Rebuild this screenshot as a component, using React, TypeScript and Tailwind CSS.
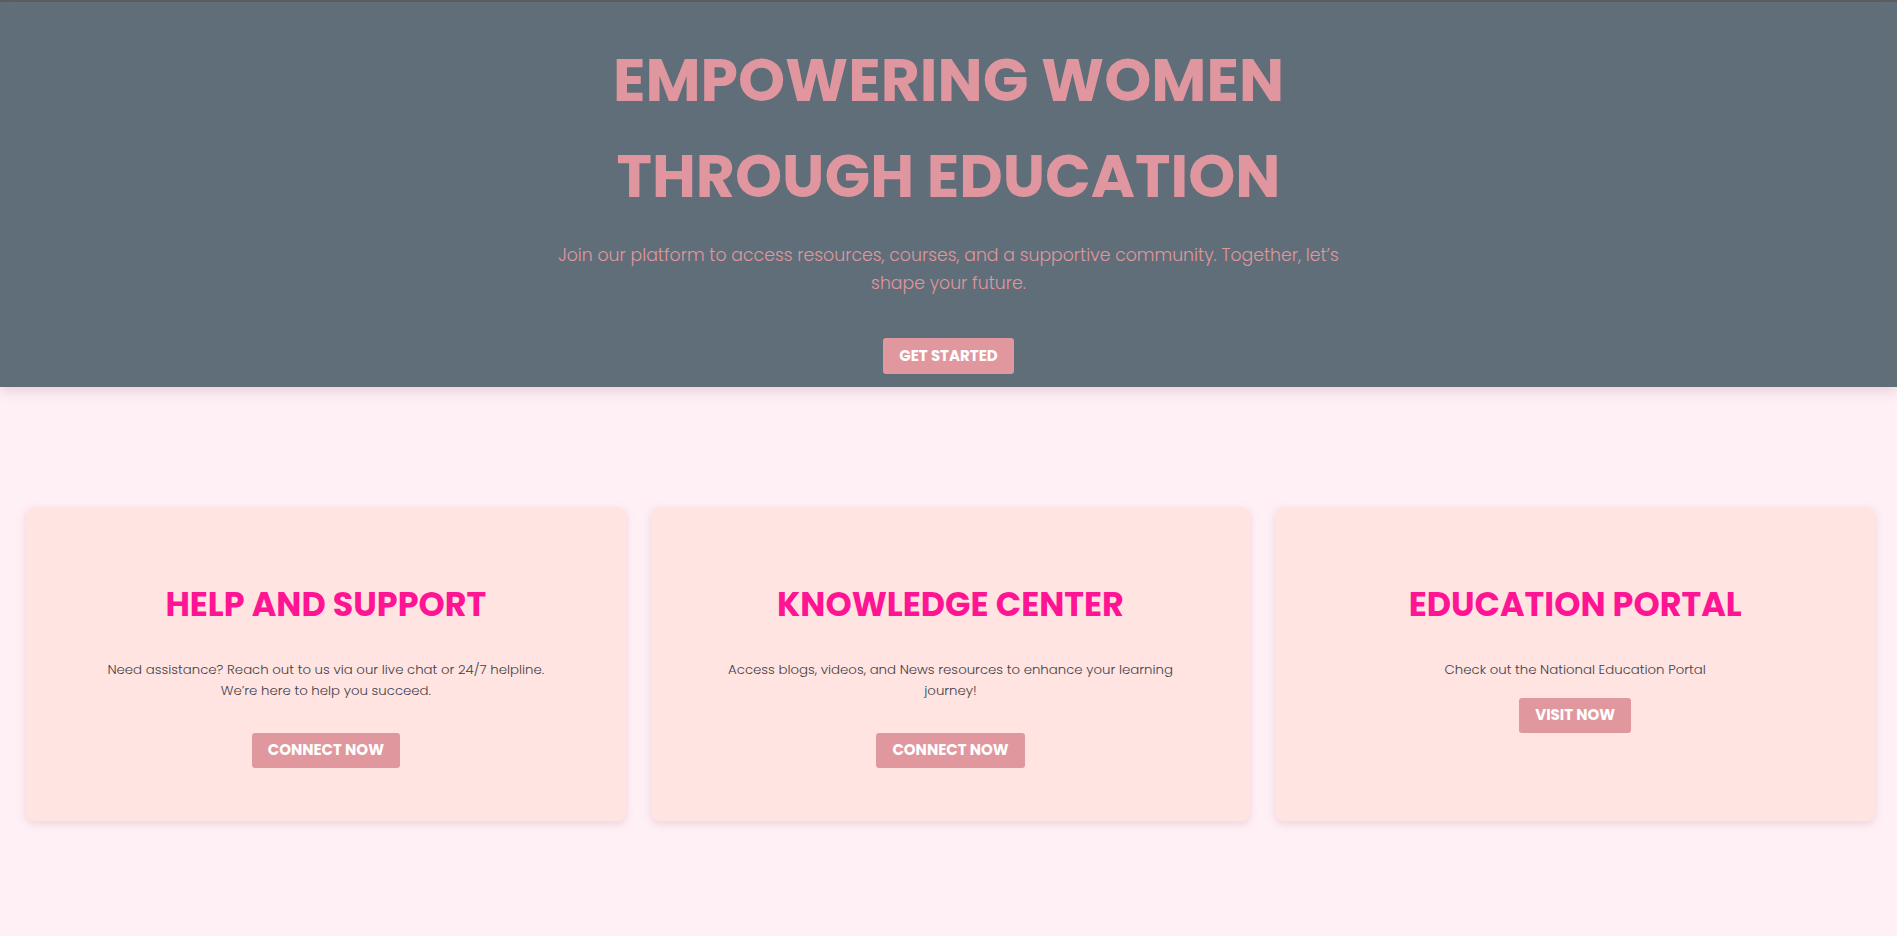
import React from 'react';

const font = { fontFamily: 'Poppins, Inter, "Noto Sans", sans-serif' };

const cards = [
    {
        title: 'HELP AND SUPPORT',
        text: 'Need assistance? Reach out to us via our live chat or 24/7 helpline. We’re here to help you succeed.',
        button: 'CONNECT NOW',
        gap: 'mt-[32px]',
    },
    {
        title: 'KNOWLEDGE CENTER',
        text: 'Access blogs, videos, and News resources to enhance your learning journey!',
        button: 'CONNECT NOW',
        gap: 'mt-[32px]',
    },
    {
        title: 'EDUCATION PORTAL',
        text: 'Check out the National Education Portal',
        button: 'VISIT NOW',
        gap: 'mt-[18px]',
    },
];

const App: React.FC = () => {
    return (
        <div className="min-h-screen bg-[#fff0f5]" style={font}>
            <div className="h-[2px] bg-[#5e5e5e]" />

            <section className="relative z-10 bg-[#5f6e78] pt-[30px] pb-[13px] text-center shadow-[0_4px_12px_rgba(120,60,80,0.18)]">
                <h1 className="text-[60px] leading-[96px] font-bold text-[#e0969e]">
                    EMPOWERING WOMEN
                    <br />
                    THROUGH EDUCATION
                </h1>
                <p className="mx-auto mt-[17px] max-w-[800px] text-[17.3px] leading-7 font-light text-[#e0969e]">
                    Join our platform to access resources, courses, and a supportive community. Together, let’s shape your future.
                </p>
                <button className="mt-[41px] h-9 rounded-[3px] bg-[#e0989e] px-4 text-[15px] font-bold text-white">
                    GET STARTED
                </button>
            </section>

            <section className="grid grid-cols-3 gap-[25px] pt-[120px] pr-[22px] pb-[115px] pl-[26px]">
                {cards.map((card) => (
                    <div
                        key={card.title}
                        className="flex h-[314px] flex-col items-center rounded-lg bg-[#ffe4e1] px-[70px] pt-[71px] text-center shadow-[0_3px_8px_rgba(150,90,100,0.18)]"
                    >
                        <h2 className="text-[33.4px] leading-[54px] font-bold text-[#ff1493]">{card.title}</h2>
                        <p className="mt-[27px] text-[13.3px] leading-[21px] font-light text-[#3f3f46]">{card.text}</p>
                        <button className={`${card.gap} h-[35px] rounded-[3px] bg-[#e0989e] px-4 text-[15px] font-bold text-white`}>
                            {card.button}
                        </button>
                    </div>
                ))}
            </section>
        </div>
    );
};

export default App;
